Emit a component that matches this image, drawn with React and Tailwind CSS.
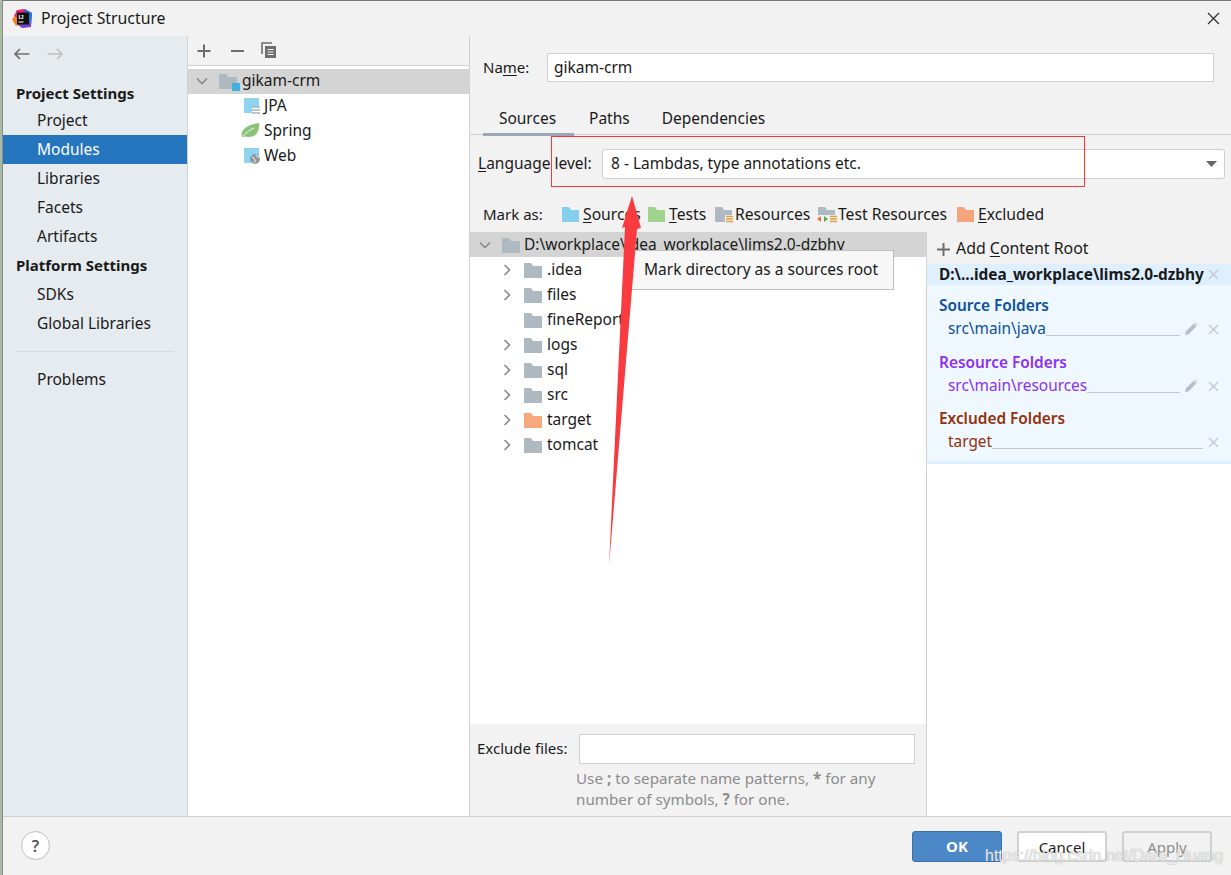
import React from "react";

const F = "font-['Noto_Sans','Open_Sans',sans-serif]";

function U({ children }) {
  return <span className="underline underline-offset-2 decoration-1">{children}</span>;
}

function Folder({ color = "#AFB9C1", className = "" }) {
  return (
    <svg width="18" height="16" viewBox="0 0 18 16" className={`shrink-0 ${className}`}>
      <path d="M0 1h7l2 3h9v12H0z" fill={color} />
    </svg>
  );
}

function Chevron({ down, light }) {
  return (
    <svg width="12" height="12" viewBox="0 0 12 12" className="shrink-0">
      <path
        d={down ? "M1 3.5l5 5 5-5" : "M3.5 1l5 5-5 5"}
        fill="none"
        stroke={light ? "#999" : "#8a8a8a"}
        strokeWidth="1.6"
      />
    </svg>
  );
}

function Nav({ children, active }) {
  return (
    <div
      className={`h-[29px] pl-[34px] flex items-center text-[15.5px] ${
        active ? "bg-[#2675bf] text-white" : "text-[#1a1a1a]"
      }`}
    >
      {children}
    </div>
  );
}

function Cross({ className = "" }) {
  return (
    <svg width="11" height="11" viewBox="0 0 11 11" className={`shrink-0 ${className}`}>
      <path d="M1 1l9 9M10 1l-9 9" stroke="#c4c8cc" strokeWidth="1.4" />
    </svg>
  );
}

function Pencil() {
  return (
    <svg width="14" height="14" viewBox="0 0 14 14" className="shrink-0">
      <path d="M1 13l.8-3.6L9.5 1.7l2.8 2.8-7.7 7.7zM10.2 1l.8-.6 2.6 2.6-.7.8z" fill="#b9bec3" />
    </svg>
  );
}

function TreeRow({ name, color, chevron = true }) {
  return (
    <div className="h-[25px] flex items-center pl-[31px] text-[15.5px] text-[#1a1a1a]">
      <span className="w-[12px] shrink-0">{chevron && <Chevron />}</span>
      <span className="w-[11px] shrink-0" />
      <Folder color={color} />
      <span className="ml-[5px]">{name}</span>
    </div>
  );
}

function MarkIcon({ color, extra }) {
  return (
    <svg width="20" height="17" viewBox="0 0 20 17" className="shrink-0">
      <path d="M1 1h7l2 3h8v12H1z" fill={color} />
      {extra === "res" && (
        <g>
          <rect x="11" y="9" width="8" height="8" fill="#f2f2f2" />
          <path d="M12 10.5h7M12 13h7M12 15.5h7" stroke="#d9a343" strokeWidth="1.3" />
        </g>
      )}
      {extra === "test" && (
        <g>
          <rect x="0" y="9" width="20" height="8" fill="#f2f2f2" />
          <path d="M13 10.5h7M13 13h7M13 15.5h7" stroke="#d9a343" strokeWidth="1.3" />
          <path d="M4 10l-4 3 4 3z" fill="#e8703a" />
          <path d="M7 10l4 3-4 3z" fill="#5ca84f" />
        </g>
      )}
    </svg>
  );
}

function FolderGroup({ title, titleClass, path, pathClass, pencil, className = "" }) {
  return (
    <div className={className}>
      <div className={`pl-[12px] h-[22px] flex items-center font-semibold text-[15.4px] ${titleClass}`}>{title}</div>
      <div className="h-[24px] pl-[21px] pr-[12px] flex items-center">
        <span className={`text-[15.4px] ${pathClass}`}>{path}</span>
        <span className="flex-1 self-end mb-[5px] border-b border-[#c4c8cc]" />
        {pencil && <span className="ml-[4px]"><Pencil /></span>}
        <Cross className={pencil ? "ml-[10px]" : "ml-[5px]"} />
      </div>
    </div>
  );
}

export default function App() {
  return (
    <div className={`${F} relative w-[1231px] h-[875px] overflow-hidden flex bg-[#f2f2f2] text-[#1a1a1a]`}>
      {/* Window behind the dialog */}
      <div className="w-[3px] shrink-0 bg-[#a9bba5] border-r border-[#8b8b8b]" />

      <div className="flex-1 flex flex-col min-w-0 border-t border-[#777]">
        {/* Title bar */}
        <div className="h-[35px] shrink-0 flex items-center bg-[#f2f2f2]">
          <svg width="21" height="21" viewBox="0 0 21 21" className="ml-[9px]">
            <path d="M4 3L12 1l8 4-1 14-9 1-5-4z" fill="#7b3fd0" />
            <path d="M2 8l3-6 8-1-3 6-3 11-3-4z" fill="#f0276f" />
            <path d="M13 1l7 4-1 10-4-2z" fill="#1d79d8" />
            <path d="M0 11l4-3 3 8-3 2z" fill="#f77f19" />
            <rect x="5" y="4.5" width="12" height="12" fill="#111" />
            <text x="6.5" y="11" fontSize="6" fontWeight="700" fill="#fff" fontFamily="Liberation Sans">IJ</text>
            <rect x="6.5" y="13.5" width="5" height="1" fill="#fff" />
          </svg>
          <span className="ml-[8px] text-[15.8px]">Project Structure</span>
          <svg width="13" height="13" viewBox="0 0 13 13" className="ml-auto mr-[11px]">
            <path d="M1 1l11 11M12 1L1 12" stroke="#333" strokeWidth="1.3" />
          </svg>
        </div>

        {/* Body */}
        <div className="flex-1 flex min-h-0">
          {/* Sidebar */}
          <div className="w-[185px] shrink-0 bg-[#e6ebf0] border-r border-[#d1d1d1] flex flex-col">
            <div className="h-[36px] flex items-center pl-[10px] gap-[17px]">
              <svg width="17" height="12" viewBox="0 0 17 12">
                <path d="M16.5 6H2M7 1L2 6l5 5" fill="none" stroke="#6e6e6e" strokeWidth="1.7" />
              </svg>
              <svg width="17" height="12" viewBox="0 0 17 12">
                <path d="M0.5 6H15M10 1l5 5-5 5" fill="none" stroke="#c0c0c0" strokeWidth="1.7" />
              </svg>
            </div>
            <div className="h-[34px] pl-[13px] flex items-end pb-[2px] font-bold text-[15px]">Project Settings</div>
            <Nav>Project</Nav>
            <Nav active>Modules</Nav>
            <Nav>Libraries</Nav>
            <Nav>Facets</Nav>
            <Nav>Artifacts</Nav>
            <div className="h-[29px] pl-[13px] flex items-center font-bold text-[15px]">Platform Settings</div>
            <Nav>SDKs</Nav>
            <Nav>Global Libraries</Nav>
            <div className="mt-[13px] mx-[13px] border-t border-[#d5dade]" />
            <div className="mt-[13px]"><Nav>Problems</Nav></div>
          </div>

          {/* Module list */}
          <div className="w-[282px] shrink-0 border-r border-[#d1d1d1] flex flex-col bg-white">
            <div className="h-[30px] shrink-0 bg-[#f2f2f2] flex items-center pl-[9px] border-b border-[#d1d1d1]">
              <svg width="14" height="14" viewBox="0 0 14 14">
                <path d="M7 0.5v13M0.5 7h13" stroke="#6e6e6e" strokeWidth="2" />
              </svg>
              <svg width="14" height="14" viewBox="0 0 14 14" className="ml-[19px]">
                <path d="M1 7h13" stroke="#6e6e6e" strokeWidth="2" />
              </svg>
              <svg width="16" height="17" viewBox="0 0 16 17" className="ml-[17px]">
                <path d="M1 12V1h10" fill="none" stroke="#6e6e6e" strokeWidth="1.6" />
                <rect x="4" y="4" width="11" height="12" fill="#6e6e6e" />
                <path d="M6.5 7.5h6M6.5 10h6M6.5 12.5h6" stroke="#f2f2f2" strokeWidth="1" />
              </svg>
            </div>
            <div className="mt-[3px] h-[25px] bg-[#d4d4d4] flex items-center pl-[8px] pb-[2px] text-[15.5px]">
              <Chevron down />
              <span className="relative ml-[11px]">
                <Folder />
                <span className="absolute right-[-3px] bottom-[-2px] w-[8px] h-[8px] bg-[#3fb1e3]" />
              </span>
              <span className="ml-[5px]">gikam-crm</span>
            </div>
            <div className="h-[25px] flex items-center pl-[55px] pb-[2px] text-[15.5px]">
              <svg width="17" height="17" viewBox="0 0 17 17" className="shrink-0">
                <path d="M1 1h15v9H9v6H1z" fill="#8ed4f0" />
                <path d="M9 10h8M9 13h8M9 16h8" stroke="#a9b2b9" strokeWidth="1.5" />
              </svg>
              <span className="ml-[4px]">JPA</span>
            </div>
            <div className="h-[25px] flex items-center pl-[53px] pb-[2px] text-[15.5px]">
              <svg width="19" height="17" viewBox="0 0 19 17" className="shrink-0">
                <path d="M1 15C-1 8 6 3 18 1c1 8-3 14-10 14-3 0-5-.5-7 0z" fill="#8dc379" />
                <path d="M2 14C6 10 9 8 13 6" stroke="#fff" strokeWidth="0.9" fill="none" />
              </svg>
              <span className="ml-[4px]">Spring</span>
            </div>
            <div className="h-[25px] flex items-center pl-[55px] pb-[2px] text-[15.5px]">
              <svg width="17" height="17" viewBox="0 0 17 17" className="shrink-0">
                <path d="M1 1h15v7H8v8H1z" fill="#8ed4f0" />
                <circle cx="12" cy="12" r="5" fill="#8e979e" />
                <path d="M9 10c2 0 2 2 3 3s-1 2-1 3M13 8c0 2 3 1 3 3" stroke="#fff" strokeWidth="1" fill="none" />
              </svg>
              <span className="ml-[4px]">Web</span>
            </div>
          </div>

          {/* Detail */}
          <div className="flex-1 min-w-0 flex flex-col">
            <div className="h-[62px] shrink-0 flex items-start pt-[17px] pl-[13px]">
              <span className="text-[15px] mt-[3px] w-[64px]">Na<U>m</U>e:</span>
              <div className="w-[667px] h-[29px] bg-white border border-[#d0d0d0] flex items-center pl-[6px] text-[15.5px]">gikam-crm</div>
            </div>
            <div className="h-[37px] shrink-0 flex pl-[13px] border-b border-[#d1d1d1] text-[15.5px]">
              <div className="w-[91px] flex items-center justify-center border-b-[3px] border-[#9ba6b8] mb-[-1px] h-[38px] pt-[6px] pr-[2px]">Sources</div>
              <div className="ml-[15px] flex items-center pt-[5px]">Paths</div>
              <div className="ml-[32px] flex items-center pt-[5px]">Dependencies</div>
            </div>
            <div className="h-[44px] shrink-0 flex items-center pl-[8px] mt-[7px] text-[15.5px]">
              <span className="w-[124px]"><U>L</U>anguage level:</span>
              <div className="w-[623px] h-[30px] bg-white border border-[#d0d0d0] rounded-[3px] flex items-center pl-[8px] pr-[7px]">
                <span>8 - Lambdas, type annotations etc.</span>
                <svg width="11" height="6" viewBox="0 0 11 6" className="ml-auto">
                  <path d="M0 0h11L5.5 6z" fill="#666" />
                </svg>
              </div>
            </div>
            <div className="h-[46px] shrink-0 flex items-center pl-[13px] text-[15.7px] pt-[11px]">
              <span className="w-[78px] text-[15px]">Mark as:</span>
              <MarkIcon color="#86cfec" />
              <span className="ml-[2px] w-[64px]"><U>S</U>ources</span>
              <MarkIcon color="#9fd38e" />
              <span className="ml-[2px] w-[45px]"><U>T</U>ests</span>
              <MarkIcon color="#AFB9C1" extra="res" />
              <span className="ml-[1px] w-[82px]">Resources</span>
              <MarkIcon color="#AFB9C1" extra="test" />
              <span className="ml-[1px] w-[118px]">Test Resources</span>
              <MarkIcon color="#f4a57c" />
              <span className="ml-[2px]"><U>E</U>xcluded</span>
            </div>

            <div className="flex-1 min-h-0 flex">
              {/* Tree + exclude */}
              <div className="w-[457px] shrink-0 border-r border-[#d1d1d1] flex flex-col">
                <div className="flex-1 bg-white">
                  <div className="h-[25px] bg-[#d4d4d4] flex items-center pl-[9px] text-[15.5px]">
                    <Chevron down />
                    <Folder className="ml-[11px]" />
                    <span className="ml-[4px]">D:\workplace\idea_workplace\lims2.0-dzbhy</span>
                  </div>
                  <TreeRow name=".idea" />
                  <TreeRow name="files" />
                  <TreeRow name="fineReport" chevron={false} />
                  <TreeRow name="logs" />
                  <TreeRow name="sql" />
                  <TreeRow name="src" />
                  <TreeRow name="target" color="#f7a97e" />
                  <TreeRow name="tomcat" />
                </div>
                <div className="h-[92px] shrink-0 bg-[#f2f2f2] pt-[10px]">
                  <div className="flex items-center pl-[7px]">
                    <span className="text-[15px] w-[102px] pb-[2px]">Exclude files:</span>
                    <div className="w-[336px] h-[30px] bg-white border border-[#d0d0d0]" />
                  </div>
                  <div className="pl-[106px] mt-[4px] text-[15.2px] leading-[21px] text-[#8c8c8c]">
                    Use <b>;</b> to separate name patterns, <b>*</b> for any<br />
                    number of symbols, <b>?</b> for one.
                  </div>
                </div>
              </div>

              {/* Content roots */}
              <div className="flex-1 min-w-0 flex flex-col bg-white">
                <div className="h-[32px] shrink-0 bg-[#f2f2f2] flex items-center pl-[10px] pt-[2px] text-[15.9px]">
                  <svg width="13" height="13" viewBox="0 0 13 13">
                    <path d="M6.5 0v13M0 6.5h13" stroke="#6e6e6e" strokeWidth="2" />
                  </svg>
                  <span className="ml-[6px]">Add <U>C</U>ontent Root</span>
                </div>
                <div className="h-[21px] shrink-0 bg-[#def0ff] flex items-center pl-[12px] pr-[12px] font-bold text-[15.4px]">
                  <span className="whitespace-nowrap">D:\...idea_workplace\lims2.0-dzbhy</span>
                  <Cross className="ml-auto" />
                </div>
                <div className="h-[179px] shrink-0 bg-[#f0f8ff] border-b-[3px] border-[#def0ff] pt-[10px]">
                  <FolderGroup title="Source Folders" titleClass="text-[#0b4f9e]" path="src\main\java" pathClass="text-[#0b4f9e]" pencil />
                  <FolderGroup className="mt-[11px]" title="Resource Folders" titleClass="text-[#8c30f0]" path="src\main\resources" pathClass="text-[#8c30f0]" pencil />
                  <FolderGroup className="mt-[10px]" title="Excluded Folders" titleClass="text-[#93300a]" path="target" pathClass="text-[#93300a]" />
                </div>
              </div>
            </div>
          </div>
        </div>

        {/* Footer */}
        <div className="h-[59px] shrink-0 border-t border-[#d1d1d1] flex items-start pt-[14px] pl-[18px] pr-[19px]">
          <div className="w-[29px] h-[29px] rounded-full bg-white border border-[#bdbdbd] flex items-center justify-center text-[16px] font-semibold text-[#555]">?</div>
          <div className="ml-auto flex gap-[15px] text-[15px]">
            <div className="w-[90px] h-[31px] rounded-[3px] bg-[#4c87c8] border border-[#3d70a8] text-white font-bold flex items-center justify-center">OK</div>
            <div className="w-[90px] h-[31px] rounded-[3px] bg-white border-2 border-[#d0d0d0] flex items-center justify-center pt-[1px]">Cancel</div>
            <div className="w-[90px] h-[31px] rounded-[3px] border-2 border-[#d0d0d0] text-[#8c8c8c] flex items-center justify-center pt-[1px]">Apply</div>
          </div>
        </div>
      </div>

      {/* Tooltip */}
      <div className="absolute left-[628px] top-[250px] w-[266px] h-[40px] bg-[#f7f7f7] border border-[#bdbdbd] flex items-center pl-[15px] text-[15.5px] whitespace-nowrap">
        Mark directory as a sources root
      </div>

      {/* Red annotations */}
      <div className="absolute left-[551px] top-[136px] w-[534px] h-[51px] border border-[#f23a3a] pointer-events-none" />
      <svg width="50" height="380" viewBox="0 0 50 380" className="absolute left-[600px] top-[195px] pointer-events-none">
        <path d="M32 1L41 33 37 34 9 371 25 32 22 33z" fill="#f93b3f" />
      </svg>

      {/* Watermark */}
      <div className="absolute left-[985px] top-[846px] text-[16px] leading-[20px] text-white/80 whitespace-nowrap [text-shadow:0_0_1px_#888] font-['Liberation_Sans',sans-serif]">
        https://blog.csdn.net/Dare_Huang
      </div>
    </div>
  );
}
